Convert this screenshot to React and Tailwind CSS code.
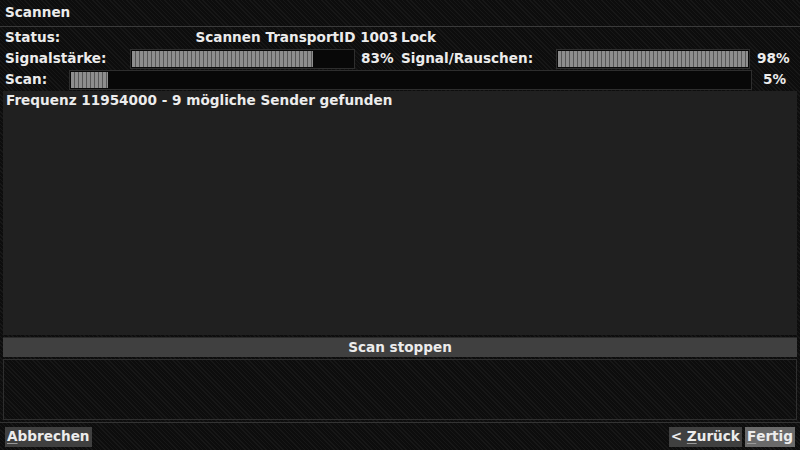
import React from "react";

const pattern =
  "bg-[#0d0d0d] bg-[repeating-linear-gradient(45deg,#0d0d0d_0px,#0d0d0d_2px,#171717_2px,#171717_3px)]";

function Bar({ pct, className }) {
  return (
    <div className={"h-[20px] border border-[#2e2e2e] bg-[#080808] p-px " + className}>
      <div
        className="h-full bg-[repeating-linear-gradient(90deg,#8e8e8e_0px,#8e8e8e_3px,#575757_3px,#575757_4px)]"
        style={{ width: pct + "%" }}
      />
    </div>
  );
}

export default function App() {
  return (
    <div
      className={"w-[800px] h-[450px] overflow-hidden flex flex-col text-[#ececec] font-bold text-[13.6px] leading-none " + pattern}
      style={{ fontFamily: '"DejaVu Sans", sans-serif' }}
    >
      <div className="h-[27px] border-b border-[#3a3a3a] flex items-center px-[5px] shrink-0">Scannen</div>
      <div className="h-[21px] flex items-center shrink-0">
        <div className="w-[400px] flex justify-between pl-[5px] pr-[2px]">
          <span>Status:</span>
          <span>Scannen TransportID 1003</span>
        </div>
        <div className="pl-[1px]">Lock</div>
      </div>
      <div className="h-[22px] flex items-center shrink-0">
        <span className="pl-[5px] w-[130px]">Signalstärke:</span>
        <Bar pct={82} className="w-[225px]" />
        <span className="w-[46px] pl-[6px]">83%</span>
        <span className="w-[155px]">Signal/Rauschen:</span>
        <Bar pct={100} className="w-[194px]" />
        <span className="pl-[7px]">98%</span>
      </div>
      <div className="h-[20px] flex items-center shrink-0">
        <span className="pl-[5px] w-[69px]">Scan:</span>
        <Bar pct={5.5} className="w-[683px]" />
        <span className="pl-[11px]">5%</span>
      </div>
      <div className="mx-[3px] mt-px h-[244px] bg-[#202020] shrink-0 px-[3px] pt-[3px]">
        Frequenz 11954000 - 9 mögliche Sender gefunden
      </div>
      <div className="mx-[3px] mt-[2px] h-[20px] bg-[#404040] border-t border-[#2a2a2a] flex items-center justify-center shrink-0">
        Scan stoppen
      </div>
      <div className="mx-[3px] mt-[2px] h-[61px] border border-[#2e2e2e] shrink-0" />
      <div className="mt-[2px] border-t border-[#333] shrink-0" />
      <div className="flex items-center justify-between px-[5px] pt-[4px]">
        <div className="h-[20px] bg-[#404040] px-[2px] flex items-center">
          <span className="underline decoration-[#999] underline-offset-2">A</span>bbrechen
        </div>
        <div className="flex gap-[3px]">
          <div className="h-[20px] bg-[#404040] px-[2px] flex items-center">
            &lt;&nbsp;<span className="underline decoration-[#999] underline-offset-2">Z</span>urück
          </div>
          <div className="h-[20px] bg-[#6a6a6a] px-[2px] flex items-center">
            <span className="underline decoration-[#999] underline-offset-2">F</span>ertig
          </div>
        </div>
      </div>
    </div>
  );
}
